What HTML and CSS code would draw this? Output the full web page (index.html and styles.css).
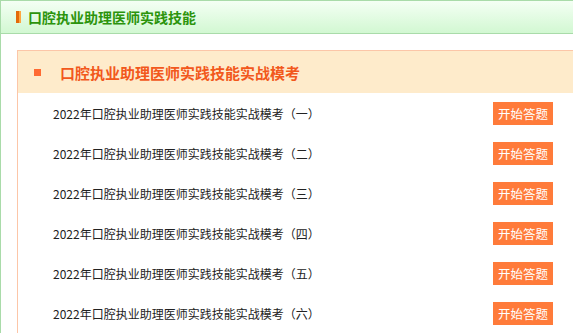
FILE: index.html
```html
<!DOCTYPE html>
<html lang="zh-CN">

<head>
    <meta charset="UTF-8">
    <title>口腔执业助理医师实践技能</title>
    <link rel="stylesheet" href="styles.css">
</head>

<body>
    <div class="panel">
        <div class="panel-head">
            <span class="bar"></span>
            <h2>口腔执业助理医师实践技能</h2>
        </div>

        <div class="exam-box">
            <div class="exam-head">
                <span class="dot"></span>
                <h3>口腔执业助理医师实践技能实战模考</h3>
            </div>
            <ul class="exam-list">
                <li><span>2022年口腔执业助理医师实践技能实战模考（一）</span><a href="#" class="btn">开始答题</a></li>
                <li><span>2022年口腔执业助理医师实践技能实战模考（二）</span><a href="#" class="btn">开始答题</a></li>
                <li><span>2022年口腔执业助理医师实践技能实战模考（三）</span><a href="#" class="btn">开始答题</a></li>
                <li><span>2022年口腔执业助理医师实践技能实战模考（四）</span><a href="#" class="btn">开始答题</a></li>
                <li><span>2022年口腔执业助理医师实践技能实战模考（五）</span><a href="#" class="btn">开始答题</a></li>
                <li><span>2022年口腔执业助理医师实践技能实战模考（六）</span><a href="#" class="btn">开始答题</a></li>
            </ul>
        </div>
    </div>
</body>

</html>
```

FILE: styles.css
```css
* {
    margin: 0;
    padding: 0;
    box-sizing: border-box;
}

body {
    font-family: "Noto Sans CJK SC", "Noto Sans", sans-serif;
    background-color: #fff;
    color: #333;
}

/* outer panel, cut off on the right */
.panel {
    border: 1px solid #a9dba9;
    border-right: none;
    border-bottom: none;
}

.panel-head {
    display: flex;
    align-items: center;
    height: 33px;
    padding-left: 15px;
    background: linear-gradient(#f4fff4, #d2f8d2);
    border-bottom: 1px solid #a9dba9;
}

.bar {
    width: 5px;
    height: 12px;
    margin-right: 7px;
    background: linear-gradient(to right, #e36a0a 60%, #ffa640 60%);
}

.panel-head h2 {
    font-size: 14px;
    font-weight: bold;
    color: #2c940c;
    line-height: 1;
}

.exam-box {
    margin: 16px 0 0 16px;
    border: 1px solid #fcc6a8;
    border-right: none;
    border-bottom: none;
}

.exam-head {
    display: flex;
    align-items: center;
    height: 42px;
    padding-left: 16px;
    background-color: #feebcb;
}

.dot {
    width: 7px;
    height: 7px;
    margin-right: 19px;
    background-color: #ff6a33;
}

.exam-head h3 {
    font-size: 15px;
    font-weight: bold;
    color: #f2581c;
}

.exam-list {
    list-style: none;
}

.exam-list li {
    display: flex;
    align-items: center;
    justify-content: space-between;
    height: 40px;
    padding: 0 20px 0 35px;
    font-size: 12px;
    color: #222;
}

.btn {
    display: block;
    width: 60px;
    height: 23px;
    line-height: 23px;
    text-align: center;
    font-size: 12.5px;
    color: #fff;
    text-decoration: none;
    background-color: #ff7b3a;
}
```
